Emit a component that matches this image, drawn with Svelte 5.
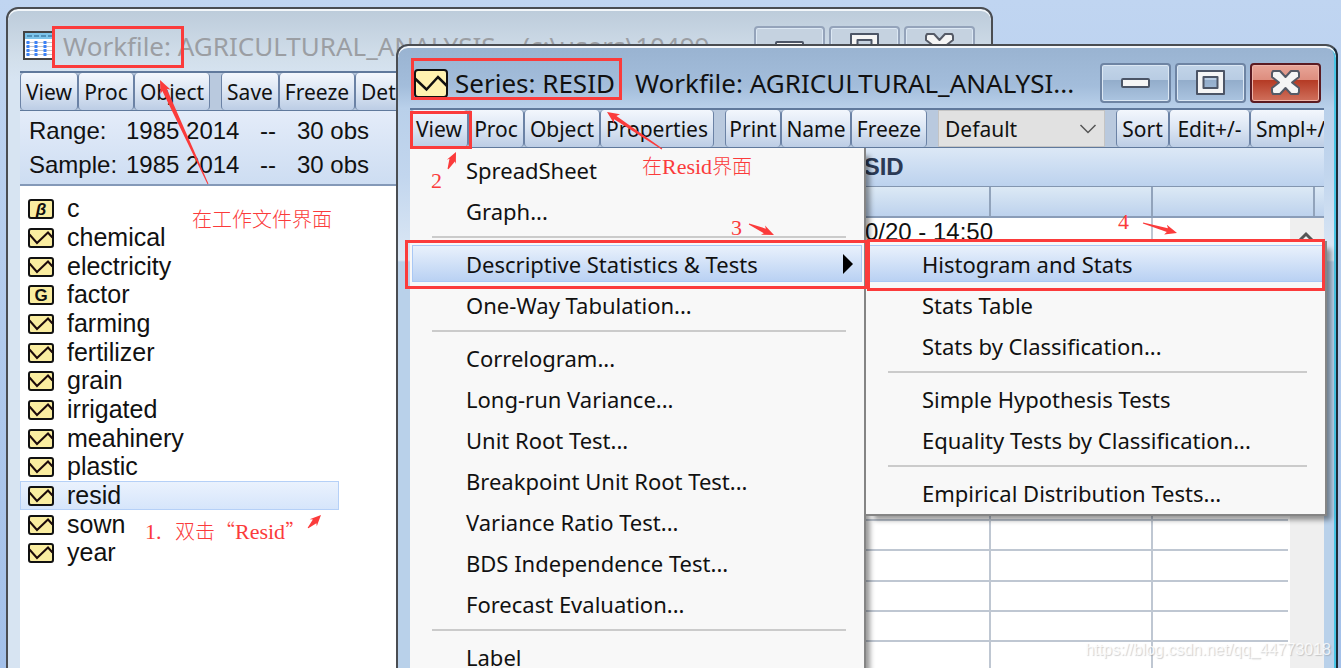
<script>
  const objects = [
    { name: 'c', kind: 'beta' },
    { name: 'chemical', kind: 'series' },
    { name: 'electricity', kind: 'series' },
    { name: 'factor', kind: 'group' },
    { name: 'farming', kind: 'series' },
    { name: 'fertilizer', kind: 'series' },
    { name: 'grain', kind: 'series' },
    { name: 'irrigated', kind: 'series' },
    { name: 'meahinery', kind: 'series' },
    { name: 'plastic', kind: 'series' },
    { name: 'resid', kind: 'series' },
    { name: 'sown', kind: 'series' },
    { name: 'year', kind: 'series' }
  ];
  let selected = $state('resid');

  const viewMenu = [
    ['SpreadSheet', 'Graph...'],
    ['Descriptive Statistics & Tests', 'One-Way Tabulation...'],
    [
      'Correlogram...',
      'Long-run Variance...',
      'Unit Root Test...',
      'Breakpoint Unit Root Test...',
      'Variance Ratio Test...',
      'BDS Independence Test...',
      'Forecast Evaluation...'
    ],
    ['Label']
  ];
  const statsMenu = [
    ['Histogram and Stats', 'Stats Table', 'Stats by Classification...'],
    ['Simple Hypothesis Tests', 'Equality Tests by Classification...'],
    ['Empirical Distribution Tests...']
  ];
  const open = ['Descriptive Statistics & Tests', 'Histogram and Stats'];
  const rows = Array.from({ length: 15 }, (_, i) => i);

  const boxes = [
    [53.5, 27.5, 129, 39],
    [412.5, 59.5, 208, 39],
    [411.5, 112.5, 59, 35],
    [406.5, 241.5, 460, 46],
    [868.5, 240.5, 455, 49]
  ];

  // Tapered arrow from the tail (x1, y1) to the tip (x2, y2).
  function arrow(x1, y1, x2, y2, head, half, shaft) {
    const len = Math.hypot(x2 - x1, y2 - y1);
    const ux = (x2 - x1) / len;
    const uy = (y2 - y1) / len;
    const at = (back, side) => `${x2 - ux * back - uy * side},${y2 - uy * back + ux * side}`;
    return [
      at(0, 0),
      at(head, half),
      at(head - 2, shaft),
      at(len, 0.5),
      at(len, -0.5),
      at(head - 2, -shaft),
      at(head, -half)
    ].join(' ');
  }
  const arrows = [
    arrow(208, 184, 160, 80, 13, 5.5, 2.5),
    arrow(662, 149, 607, 112, 12, 5.5, 2),
    arrow(448, 169, 456, 152, 11, 5, 3),
    arrow(749, 224, 774, 235, 12, 5, 2.5),
    arrow(1143, 223, 1177, 233, 12, 5, 2),
    arrow(308, 528, 321, 515, 11, 5, 2.5)
  ];
</script>

{#snippet seriesIcon()}
  <rect x="1" y="1" width="24" height="18" rx="2" fill="#faeda0" stroke="#111" stroke-width="2" />
  <path d="M1.5 6.5 9 15 20 4.500 24.500 9.500" fill="none" stroke="#1c0a0a" stroke-width="2" />
{/snippet}

{#snippet caption(active)}
  <div class="caption">
    <button class="cap" aria-label="Minimize">
      <svg width="30" height="28" viewBox="0 0 30 28"><rect x="1" y="10" width="27" height="8" rx="1" fill="#f5f5f5" stroke="#4c5566" stroke-width="2" /></svg>
    </button>
    <button class="cap" aria-label="Maximize">
      <svg width="30" height="28" viewBox="0 0 30 28">
        <path fill-rule="evenodd" d="M1 2h27v23H1zM7.500 8v11h14V8z" fill="#f5f5f5" stroke="#4c5566" stroke-width="2" stroke-linejoin="round" />
      </svg>
    </button>
    <button class="cap" class:close={active} aria-label="Close">
      <svg width="30" height="28" viewBox="0 0 30 28">
        <path d="M2 2h7l5.500 6L20 2h7l1 2v4l-7 5.500 7 5.500v4l-1 2h-7l-5.500-6L9 25H2l-1-2v-4l7-5.500L1 8V4z" fill="#f5f5f5" stroke="#555a66" stroke-width="2" stroke-linejoin="round" />
      </svg>
    </button>
  </div>
{/snippet}

{#snippet menuItems(groups)}
  {#each groups as group, g}
    {#if g > 0}<div class="sep"></div>{/if}
    {#each group as label}
      <button class="item" class:open={open.includes(label)} role="menuitem">
        <span>{label}</span>
        {#if label === open[0]}
          <svg width="10" height="20" viewBox="0 0 10 20"><path d="M0 0v20l10-10z" fill="#000" /></svg>
        {/if}
      </button>
    {/each}
  {/each}
{/snippet}

<main class="desktop">
  <section class="window workfile">
    <header class="title">
      <svg width="32" height="29" viewBox="0 0 32 29">
        <rect x="1" y="1" width="30" height="27" fill="#fff" stroke="#444" stroke-width="2" />
        <rect x="2" y="2" width="28" height="6" fill="#7cc4ea" />
        <path d="M4 5h26" stroke="#3f7fa8" stroke-width="1.5" stroke-dasharray="5 2" />
        <path d="M3 11.5h27M3 15.5h27M3 19.5h27M3 23.5h27" stroke="#c3c6cc" />
        <path d="M5 10v15M13 10v15M22 10v15" stroke="#3b82f6" stroke-width="3" stroke-dasharray="3 1" />
      </svg>
      <h1>Workfile: AGRICULTURAL_ANALYSIS – (c:\users\10499</h1>
      {@render caption(false)}
    </header>
    <div class="client">
      <div class="toolbar">
        <button class="w58">View</button>
        <button class="w56">Proc</button>
        <button class="w76">Object</button>
        <i></i>
        <button class="w58">Save</button>
        <button class="w76">Freeze</button>
        <button class="cut">Det</button>
      </div>
      <div class="info">
        <span>Range:</span><span>1985 2014</span><span>--</span><span>30 obs</span>
        <span>Sample:</span><span>1985 2014</span><span>--</span><span>30 obs</span>
      </div>
      <ul class="objects">
        {#each objects as o}
          <li>
            <button class:selected={selected === o.name} onclick={() => (selected = o.name)}>
              <svg width="26" height="20" viewBox="0 0 26 20">
                {#if o.kind === 'series'}
                  {@render seriesIcon()}
                {:else}
                  <rect x="1" y="1" width="24" height="18" rx="2" fill="#faeda0" stroke="#111" stroke-width="2" />
                  <text x="13" y="16" text-anchor="middle" class="glyph" class:italic={o.kind === 'beta'}>{o.kind === 'beta' ? 'β' : 'G'}</text>
                {/if}
              </svg>
              <span>{o.name}</span>
            </button>
          </li>
        {/each}
      </ul>
    </div>
  </section>

  <section class="window series">
    <header class="title">
      <svg width="34" height="29" viewBox="0 0 34 29">
        <rect x="1" y="1" width="32" height="27" rx="3" fill="#fff2b0" stroke="#111" stroke-width="2" />
        <path d="M1 9.500 12.500 20.500 24 8 33 17" fill="none" stroke="#111" stroke-width="2.500" />
      </svg>
      <h1><span>Series: RESID</span><span>Workfile: AGRICULTURAL_ANALYSI...</span></h1>
      {@render caption(true)}
    </header>
    <div class="client">
      <div class="toolbar">
        <button class="w58">View</button>
        <button class="w56">Proc</button>
        <button class="w76">Object</button>
        <button class="w114">Properties</button>
        <i></i>
        <button class="w56">Print</button>
        <button class="w70">Name</button>
        <button class="w76">Freeze</button>
        <i></i>
        <label class="pick">
          <select aria-label="Display"><option>Default</option></select>
          <svg width="18" height="12" viewBox="0 0 18 12"><path d="M1.500 2 9 9.500 16.500 2" fill="none" stroke="#555" stroke-width="1.500" /></svg>
        </label>
        <i></i>
        <button class="w52">Sort</button>
        <button class="w80">Edit+/-</button>
        <button class="cut">Smpl+/</button>
      </div>
      <div class="name">RESID</div>
      <div class="heads"><b></b><b></b><b></b><b></b><b></b><b></b><b></b></div>
      <div class="sheet">
        <table>
          <colgroup><col class="first" /><col /><col /><col /><col /><col class="rest" /></colgroup>
          <tbody>
            <tr><td colspan="5" class="stamp">0/20 - 14:50</td><td></td></tr>
            {#each rows as r}
              <tr><td></td><td></td><td></td><td></td><td></td><td></td></tr>
            {/each}
          </tbody>
        </table>
        <div class="scroll">
          <svg width="18" height="12" viewBox="0 0 18 12"><path d="M2 10 9 3l7 7" fill="none" stroke="#555" stroke-width="3" /></svg>
        </div>
      </div>
      <div class="menu view" role="menu">{@render menuItems(viewMenu)}</div>
      <div class="menu stats" role="menu">{@render menuItems(statsMenu)}</div>
    </div>
  </section>

  <div class="notes">
    <svg width="100%" height="100%">
      {#each boxes as [x, y, w, h]}
        <rect {x} {y} width={w} height={h} fill="none" stroke="#fb3b3b" stroke-width="3" />
      {/each}
      {#each arrows as points}
        <polygon {points} fill="#fb3b3b" />
      {/each}
    </svg>
    <p class="n-work">在工作文件界面</p>
    <p class="n-resid">在<span>Resid</span>界面</p>
    <p class="n-one"><span class="step">1.</span>双击“<span>Resid</span>”</p>
    <p class="n-two"><span>2</span></p>
    <p class="n-three"><span>3</span></p>
    <p class="n-four"><span>4</span></p>
  </div>
  <div class="mark">https://blog.csdn.net/qq_44773018</div>
</main>

<style>
  :global(body) { margin: 0; }
  .desktop {
    position: relative;
    height: 100vh;
    overflow: hidden;
    background: linear-gradient(#c0d5f1, #a3c0e9);
    font-family: "Noto Sans", sans-serif;
    color: #111;
  }
  .desktop * { box-sizing: border-box; }
  button { font: inherit; color: inherit; margin: 0; padding: 0; }
  svg { flex: none; }

  .window {
    position: absolute;
    bottom: -20px;
    display: flex;
    flex-direction: column;
    border: 2px solid #4a4d52;
    border-radius: 12px 12px 0 0;
    box-shadow: inset 0 2px 0 #f2f6fa;
    padding: 0 12px;
  }
  .workfile {
    left: 6px;
    top: 7px;
    width: 987px;
    background: linear-gradient(#bccbda, #d2dfeb 50px, #d7e4f2 70px);
  }
  .series {
    left: 396px;
    right: 3px;
    top: 44px;
    background: linear-gradient(#99b3d1, #a3bddb 40px, #b9d0ea 62px, #c2d6ee 130px, #dce8f5 214px, #b9d1ea 216px);
    border-right-color: #1d2b38;
    box-shadow: inset 0 2px 0 #f2f6fa, inset -2px 0 0 #48c4e4;
  }
  .title { display: flex; align-items: center; height: 62px; padding: 11px 4px 0 3px; flex: none; }
  .series .title { padding: 12px 3px 0 4px; }
  h1 { flex: 1; min-width: 0; margin: 0 0 0 8px; font-size: 26px; font-weight: 400; line-height: 36px; white-space: nowrap; }
  .series h1 { margin-left: 7px; }
  h1 span + span { margin-left: 20px; }
  .workfile h1 { color: #9b9ea3; }

  .caption { display: flex; gap: 4px; }
  .cap {
    display: grid;
    place-items: center;
    width: 71px;
    height: 40px;
    border: 2px solid #6e84a3;
    border-radius: 4px;
    background: linear-gradient(#c2d4e8, #b8cce3 42%, #93adcb 43%, #abc4e0);
    box-shadow: inset 0 0 0 1px #dce8f4;
  }
  .workfile .cap { background: #c5d2e0; border-color: #94a3ba; }
  .cap.close { background: linear-gradient(#e8a598, #dd8d7e 42%, #b53b25 43%, #d0705c); border-color: #5b1b22; box-shadow: inset 0 0 0 1px #eeb5aa; }

  .client { position: relative; flex: 1; min-height: 0; display: flex; flex-direction: column; background: #fff; }
  .toolbar {
    display: flex;
    flex: none;
    height: 40px;
    overflow: hidden;
    border: solid #60799c;
    border-width: 2px 0 1px;
    background: #b9c9de;
    font-size: 21px;
  }
  .toolbar button {
    flex: none;
    border: solid #6b82a5;
    border-width: 0 1px;
    border-radius: 4px;
    background: linear-gradient(#f3f7fd, #dbe5f3 50%, #bccde5);
    white-space: nowrap;
  }
  .toolbar i { flex: none; width: 11px; }
  .w52 { width: 53px; }
  .w56 { width: 56px; }
  .w58 { width: 58px; }
  .w70 { width: 70px; }
  .w76 { width: 76px; }
  .w80 { width: 81px; }
  .w114 { width: 114px; }
  .toolbar .cut { padding: 0 5px; }
  .pick { position: relative; flex: none; width: 167px; }
  .pick select {
    width: 100%;
    height: 100%;
    appearance: none;
    border: 1px solid #c4c4c4;
    border-radius: 0;
    background: #e1e1e1;
    padding: 0 6px;
    font: inherit;
    color: inherit;
  }
  .pick svg { position: absolute; right: 8px; top: 13px; pointer-events: none; }

  .info {
    display: grid;
    grid-template-columns: 97px 134px 37px auto;
    align-content: center;
    height: 75px;
    flex: none;
    padding: 0 0 0 9px;
    border-bottom: 2px solid #8499b8;
    background: linear-gradient(#e4ecf9, #cdddf2);
    font: 24px/34px "Liberation Sans", sans-serif;
  }
  .objects { list-style: none; margin: 0; padding: 8px 0 0; font: 25px/29px "Liberation Sans", sans-serif; }
  .objects li { height: 29px; }
  .objects li:nth-child(3n) { height: 28px; }
  .objects button {
    display: flex;
    align-items: center;
    gap: 13px;
    width: 319px;
    height: 29px;
    padding-left: 7px;
    border: 1px solid transparent;
    background: none;
    text-align: left;
  }
  .objects button.selected { background: linear-gradient(#eaf2fd, #d6e5fb); border-color: #b5d0f7; }
  .glyph { font: bold 17px "Liberation Sans", sans-serif; fill: #111; }
  .glyph.italic { font-style: italic; }

  .name {
    flex: none;
    height: 39px;
    border-bottom: 1px solid #8396b0;
    background: linear-gradient(#dce8f6, #bcd2ee);
    font: bold 24px/38px "Liberation Sans", sans-serif;
    color: #2b3a55;
    text-align: center;
  }
  .heads { display: flex; flex: none; height: 31px; overflow: hidden; border-bottom: 2px solid #8a9db8; background: linear-gradient(#dce9f5, #bdd2ed); }
  .heads b { flex: none; width: 162px; border-right: 2px solid #91a3bb; }
  .heads b:first-child { width: 95px; }
  .sheet { display: flex; flex: 1; min-height: 0; overflow: hidden; }
  table { flex: 1; min-width: 0; margin-right: 2px; table-layout: fixed; border-collapse: separate; border-spacing: 0; }
  col { width: 162px; }
  col.first { width: 95px; }
  col.rest { width: auto; }
  td { height: 30px; padding: 0; border: solid #bfc7d2; border-width: 0 2px 2px 0; }
  tr:nth-child(3n) td { height: 31px; }
  td:last-child { border-right: 0; }
  td.stamp { padding-right: 158px; font: 24px/28px "Liberation Sans", sans-serif; text-align: right; }
  .scroll { flex: none; width: 34px; padding: 8px 0 0 7px; background: #efefef; }

  .menu { position: absolute; padding: 1px 2px; background: #f8f8f8; border: solid #858585; font-size: 22px; box-shadow: 6px 6px 5px -2px #0006; }
  .view { left: 0; top: 40px; bottom: 0; width: 456px; border-width: 0 2px 0 0; }
  .stats { left: 456px; top: 133px; width: 461px; border-width: 1px 2px 2px 0; }
  .item {
    display: flex;
    align-items: center;
    justify-content: space-between;
    width: 100%;
    height: 41px;
    padding: 0 8px 0 53px;
    border: 1px solid transparent;
    background: none;
    line-height: 20px;
    white-space: nowrap;
    text-align: left;
  }
  .item.open {
    border-color: #a9c8f5;
    background: linear-gradient(#e9f1fc, #b9d1f3);
    height: 37px;
    margin: 2px 0;
  }
  .sep { height: 12px; margin: 0 16px 0 20px; background: linear-gradient(#cbcbcb, #cbcbcb) 0 5px / 100% 2px no-repeat; }

  .notes { position: absolute; inset: 0; pointer-events: none; color: #fb3b3b; }
  .notes svg { display: block; }
  .notes p { position: absolute; margin: 0; font: 300 20px/24px "Noto Sans CJK SC", sans-serif; white-space: pre; }
  .notes span { font: 22px/24px "Liberation Serif", serif; }
  .notes .step { display: inline-block; width: 30px; }
  .n-work { left: 192px; top: 207px; }
  .n-resid { left: 642px; top: 154px; }
  .n-one { left: 145px; top: 519px; }
  .n-two { left: 431px; top: 168px; }
  .n-three { left: 731px; top: 215px; }
  .n-four { left: 1118px; top: 209px; }
  .mark { position: absolute; right: 10px; bottom: 8px; font: 16px/20px "Liberation Sans", sans-serif; color: #fffc; text-shadow: 1px 1px 1px #8886; }
</style>
